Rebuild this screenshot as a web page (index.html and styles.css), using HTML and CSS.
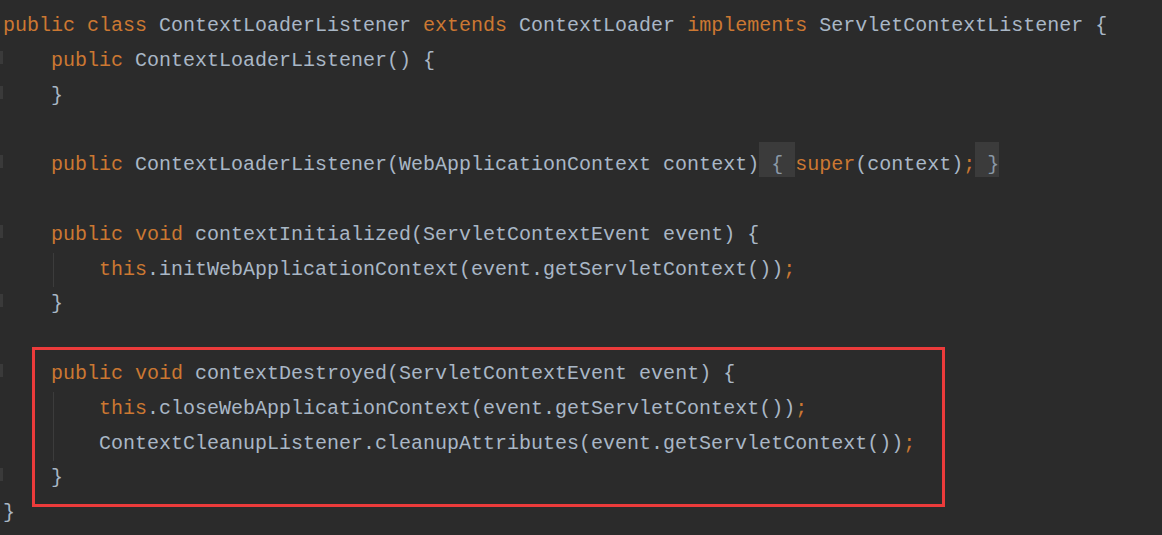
FILE: index.html
```html
<!DOCTYPE html>
<html>
<head>
<meta charset="utf-8">
<link rel="stylesheet" href="styles.css">
</head>
<body>
<div class="editor">
  <div class="line"><span class="gut"></span><span class="code"><span class="kw">public class </span>ContextLoaderListener <span class="kw">extends </span>ContextLoader <span class="kw">implements </span>ServletContextListener {</span></div>
  <div class="line"><span class="gut mark"></span><span class="code">    <span class="kw">public </span>ContextLoaderListener() {</span></div>
  <div class="line"><span class="gut mark"></span><span class="code">    }</span></div>
  <div class="line"><span class="gut"></span><span class="code"> </span></div>
  <div class="line"><span class="gut mark"></span><span class="code">    <span class="kw">public </span>ContextLoaderListener(WebApplicationContext context)<span class="fold"> { </span><span class="kw">super</span>(context)<span class="kw">;</span><span class="fold"> }</span></span></div>
  <div class="line"><span class="gut"></span><span class="code"> </span></div>
  <div class="line"><span class="gut mark"></span><span class="code">    <span class="kw">public void </span>contextInitialized(ServletContextEvent event) {</span></div>
  <div class="line"><span class="gut"></span><span class="code">    <span class="guide">    </span><span class="kw">this</span>.initWebApplicationContext(event.getServletContext())<span class="kw">;</span></span></div>
  <div class="line"><span class="gut mark"></span><span class="code">    }</span></div>
  <div class="line"><span class="gut"></span><span class="code"> </span></div>
  <div class="block">
    <div class="annot"></div>
    <div class="line"><span class="gut mark"></span><span class="code">    <span class="kw">public void </span>contextDestroyed(ServletContextEvent event) {</span></div>
    <div class="line"><span class="gut"></span><span class="code">    <span class="guide">    </span><span class="kw">this</span>.closeWebApplicationContext(event.getServletContext())<span class="kw">;</span></span></div>
    <div class="line"><span class="gut"></span><span class="code">    <span class="guide">    </span>ContextCleanupListener.cleanupAttributes(event.getServletContext())<span class="kw">;</span></span></div>
    <div class="line"><span class="gut mark"></span><span class="code">    }</span></div>
  </div>
  <div class="line"><span class="gut"></span><span class="code">}</span></div>
</div>
</body>
</html>
```
FILE: styles.css
```css
html, body {
  margin: 0;
  padding: 0;
  background: #2b2b2b;
}
.editor {
  padding-top: 9px;
  font-family: "Liberation Mono", "DejaVu Sans Mono", monospace;
  font-size: 20px;
  line-height: 34.8px;
  color: #a9b7c6;
}
.line {
  display: flex;
  height: 34.8px;
}
.gut {
  width: 3px;
  flex: none;
}
.gut.mark::before {
  content: "";
  display: block;
  width: 3px;
  height: 13px;
  margin-top: 7px;
  background: #3a3a3a;
}
.code {
  flex: none;
  white-space: pre;
}
.kw {
  color: #cc7832;
}
.fold {
  background: #3b3b3b;
  color: #8a98a6;
  padding: 11px 0 1px;
}
.guide {
  display: inline-block;
  width: 48px;
  height: 34.8px;
  vertical-align: top;
  background: linear-gradient(#3c3c3c, #3c3c3c) 2px 0 / 1px 100% no-repeat;
}
.block {
  position: relative;
}
.annot {
  position: absolute;
  left: 32px;
  width: 913px;
  top: -10px;
  bottom: -11px;
  box-sizing: border-box;
  border: 3px solid #ec3b3b;
  pointer-events: none;
}
```
